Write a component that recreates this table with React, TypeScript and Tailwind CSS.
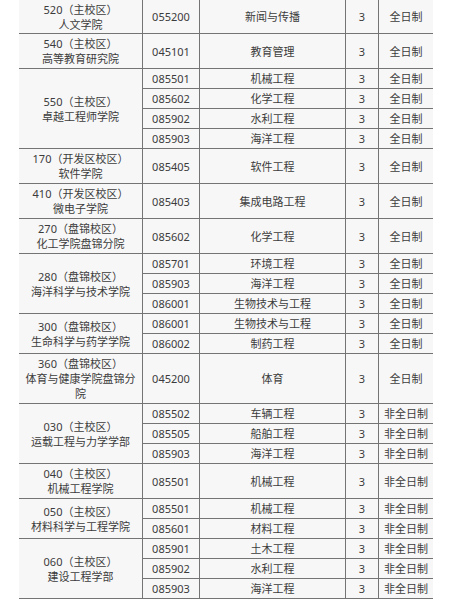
import React from 'react';

type Group = {
  dept: string[];
  rowH: 'h-[34px]' | 'h-[35px]' | 'h-[20px]' | 'h-[50px]';
  mode: '全日制' | '非全日制';
  rows: [string, string][];
};

const groups: Group[] = [
  { dept: ['520（主校区）', '人文学院'], rowH: 'h-[34px]', mode: '全日制', rows: [['055200', '新闻与传播']] },
  { dept: ['540（主校区）', '高等教育研究院'], rowH: 'h-[35px]', mode: '全日制', rows: [['045101', '教育管理']] },
  {
    dept: ['550（主校区）', '卓越工程师学院'],
    rowH: 'h-[20px]',
    mode: '全日制',
    rows: [
      ['085501', '机械工程'],
      ['085602', '化学工程'],
      ['085902', '水利工程'],
      ['085903', '海洋工程'],
    ],
  },
  { dept: ['170（开发区校区）', '软件学院'], rowH: 'h-[35px]', mode: '全日制', rows: [['085405', '软件工程']] },
  { dept: ['410（开发区校区）', '微电子学院'], rowH: 'h-[35px]', mode: '全日制', rows: [['085403', '集成电路工程']] },
  { dept: ['270（盘锦校区）', '化工学院盘锦分院'], rowH: 'h-[35px]', mode: '全日制', rows: [['085602', '化学工程']] },
  {
    dept: ['280（盘锦校区）', '海洋科学与技术学院'],
    rowH: 'h-[20px]',
    mode: '全日制',
    rows: [
      ['085701', '环境工程'],
      ['085903', '海洋工程'],
      ['086001', '生物技术与工程'],
    ],
  },
  {
    dept: ['300（盘锦校区）', '生命科学与药学学院'],
    rowH: 'h-[20px]',
    mode: '全日制',
    rows: [
      ['086001', '生物技术与工程'],
      ['086002', '制药工程'],
    ],
  },
  { dept: ['360（盘锦校区）', '体育与健康学院盘锦分', '院'], rowH: 'h-[50px]', mode: '全日制', rows: [['045200', '体育']] },
  {
    dept: ['030（主校区）', '运载工程与力学学部'],
    rowH: 'h-[20px]',
    mode: '非全日制',
    rows: [
      ['085502', '车辆工程'],
      ['085505', '船舶工程'],
      ['085903', '海洋工程'],
    ],
  },
  { dept: ['040（主校区）', '机械工程学院'], rowH: 'h-[35px]', mode: '非全日制', rows: [['085501', '机械工程']] },
  {
    dept: ['050（主校区）', '材料科学与工程学院'],
    rowH: 'h-[20px]',
    mode: '非全日制',
    rows: [
      ['085501', '机械工程'],
      ['085601', '材料工程'],
    ],
  },
  {
    dept: ['060（主校区）', '建设工程学部'],
    rowH: 'h-[20px]',
    mode: '非全日制',
    rows: [
      ['085901', '土木工程'],
      ['085902', '水利工程'],
      ['085903', '海洋工程'],
    ],
  },
];

const spanClass: Record<number, string> = {
  1: 'row-span-1',
  2: 'row-span-2',
  3: 'row-span-3',
  4: 'row-span-4',
};

const cell = 'flex items-center justify-center border-b border-[#747474] text-center';

export default function App() {
  return (
    <div className="min-h-[600px] w-full overflow-hidden bg-white">
      <div
        className="ml-[19px] grid w-[414px] grid-cols-[124px_57px_146px_33px_54px] bg-[#f7f7f7] text-[11px] leading-[15px] text-[#3c3c3c]"
        style={{ fontFamily: '"Noto Sans", "Noto Sans CJK SC", sans-serif' }}
      >
        {groups.map((g, gi) => (
          <React.Fragment key={gi}>
            <div className={`${cell} col-start-1 flex-col border-r ${spanClass[g.rows.length]}`}>
              {g.dept.map((line, li) => (
                <span key={li} className="block whitespace-nowrap">
                  {line}
                </span>
              ))}
            </div>
            {g.rows.map(([code, major], ri) => (
              <React.Fragment key={ri}>
                <div className={`${cell} ${g.rowH} border-r`}>{code}</div>
                <div className={`${cell} ${g.rowH} border-r`}>{major}</div>
                <div className={`${cell} ${g.rowH} border-r`}>3</div>
                <div className={`${cell} ${g.rowH}`}>{g.mode}</div>
              </React.Fragment>
            ))}
          </React.Fragment>
        ))}
      </div>
    </div>
  );
}
